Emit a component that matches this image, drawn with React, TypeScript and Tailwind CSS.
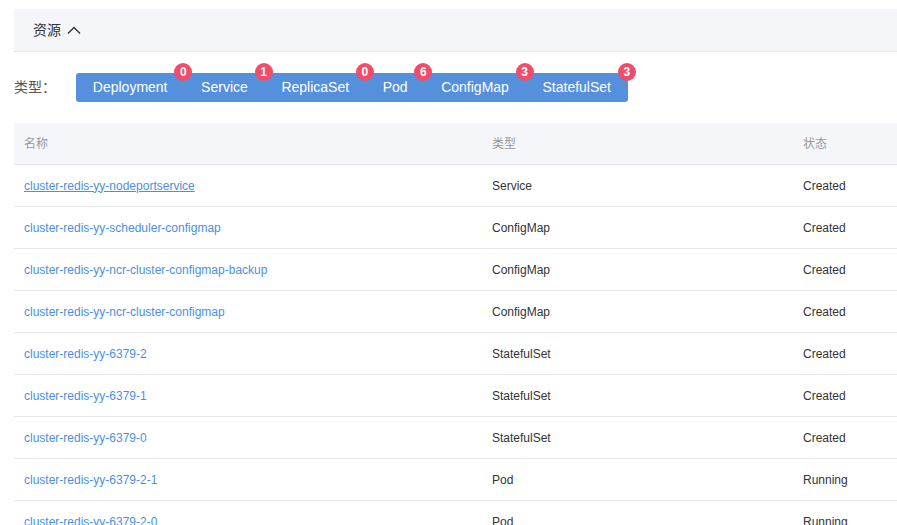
import React from 'react';

const types = [
  { name: 'Deployment', count: 0 },
  { name: 'Service', count: 1 },
  { name: 'ReplicaSet', count: 0 },
  { name: 'Pod', count: 6 },
  { name: 'ConfigMap', count: 3 },
  { name: 'StatefulSet', count: 3 },
];

const rows = [
  { name: 'cluster-redis-yy-nodeportservice', kind: 'Service', status: 'Created', hover: true },
  { name: 'cluster-redis-yy-scheduler-configmap', kind: 'ConfigMap', status: 'Created' },
  { name: 'cluster-redis-yy-ncr-cluster-configmap-backup', kind: 'ConfigMap', status: 'Created' },
  { name: 'cluster-redis-yy-ncr-cluster-configmap', kind: 'ConfigMap', status: 'Created' },
  { name: 'cluster-redis-yy-6379-2', kind: 'StatefulSet', status: 'Created' },
  { name: 'cluster-redis-yy-6379-1', kind: 'StatefulSet', status: 'Created' },
  { name: 'cluster-redis-yy-6379-0', kind: 'StatefulSet', status: 'Created' },
  { name: 'cluster-redis-yy-6379-2-1', kind: 'Pod', status: 'Running' },
  { name: 'cluster-redis-yy-6379-2-0', kind: 'Pod', status: 'Running' },
];

const App: React.FC = () => {
  return (
    <div
      className="w-[897px] h-[525px] overflow-hidden bg-white pt-[9px] pl-[14px]"
      style={{ fontFamily: '"Liberation Sans", "Noto Sans CJK SC", sans-serif' }}
    >
      {/* section header */}
      <div className="h-[43px] bg-[#f5f6fa] border-b border-[#e4e6ec] flex items-center pl-[19px] text-[14px] text-[#333]">
        <span>资源</span>
        <svg className="ml-[5px] w-[16px] h-[16px]" viewBox="0 0 16 16" fill="none" stroke="#333" strokeWidth="1.4">
          <path d="M2 11.5 8 5.5l6 6" />
        </svg>
      </div>

      {/* type filter */}
      <div className="flex items-center mt-[21px] h-[29px]">
        <span className="w-[62px] text-[14px] text-[#555]">类型：</span>
        <div className="flex rounded-[3px] bg-[#5590dd]">
          {types.map((t) => (
            <div key={t.name} className="relative h-[29px] px-[16.8px] flex items-center text-[14px] text-white">
              {t.name}
              <span className="absolute top-[-10px] right-[-8px] z-10 w-[18px] h-[18px] rounded-full bg-[#ef4d6a] text-white text-[12px] font-bold flex items-center justify-center">
                {t.count}
              </span>
            </div>
          ))}
        </div>
      </div>

      {/* table */}
      <div className="mt-[21px] text-[12px]">
        <div className="flex h-[42px] items-center bg-[#f5f6fa] border-b border-[#e6e8ee] text-[#999]">
          <div className="w-[478px] pl-[10px]">名称</div>
          <div className="w-[311px]">类型</div>
          <div className="flex-1">状态</div>
        </div>
        {rows.map((r) => (
          <div key={r.name} className="flex h-[42px] items-center border-b border-[#e8e8e8]">
            <div className={`w-[478px] pl-[10px] text-[#4a90e2] ${r.hover ? 'underline' : ''}`}>{r.name}</div>
            <div className="w-[311px] text-[#333]">{r.kind}</div>
            <div className="flex-1 text-[#333]">{r.status}</div>
          </div>
        ))}
      </div>
    </div>
  );
};

export default App;
